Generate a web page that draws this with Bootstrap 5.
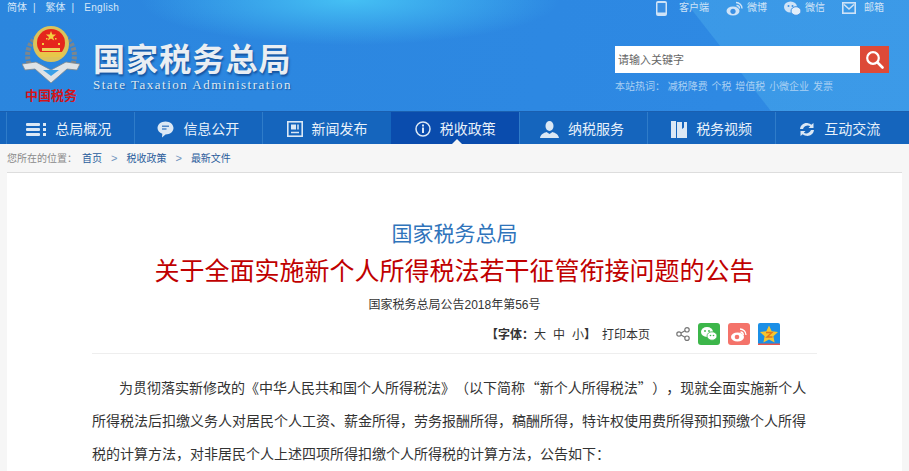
<!DOCTYPE html>
<html lang="zh-CN">
  <head>
    <meta charset="utf-8" />
    <meta name="viewport" content="width=device-width, initial-scale=1" />
    <title>国家税务总局</title>
    <link href="https://cdn.jsdelivr.net/npm/bootstrap@5.3.3/dist/css/bootstrap.min.css" rel="stylesheet" />
    <style>
      html, body { height: 471px; overflow: hidden; }
      body {
        font-family: "Liberation Sans", "Noto Sans CJK SC", sans-serif;
        background: #f6f6f6;
        color: #333;
        text-spacing-trim: space-all;
      }
      a { text-decoration: none; color: inherit; }
      .site-top {
        height: 111px;
        padding: 0 7px;
        color: #d5e6f8;
        background:
          radial-gradient(ellipse 210px 45px at 350px 0, rgba(70,195,245,.95), rgba(70,195,245,0)),
          linear-gradient(52deg, rgba(90,190,240,0) 607px, rgba(90,190,240,.3) 608px),
          linear-gradient(100deg, #2b86de 0%, #2d88e2 60%, #2f8ae4 100%);
      }
      .top-links { height: 15px; font-size: 10px; line-height: 15px; }
      .top-links .sep { margin: 0 10px 0 6px; }
      .top-links .lang-en { letter-spacing: .3px; }
      .social { font-size: 10px; line-height: 16px; gap: 17px; margin-right: 18px; color: #cfe3f7; }
      .social svg { display: block; }
      .brand { margin-top: 9px; }
      .emblem { margin: 0 13px 0 15px; }
      .brand-cn {
        font-family: "Noto Sans CJK SC", sans-serif;
        font-weight: 700;
        font-size: 32px;
        letter-spacing: 1.1px;
        line-height: 34px;
        color: #e9eef3;
        text-shadow: 1px 2px 2px rgba(10,60,130,.7);
        margin-top: 15px;
      }
      .brand-en {
        font-family: "Liberation Serif", serif;
        font-size: 13px;
        line-height: 16px;
        letter-spacing: 1.5px;
        color: #dfe8f0;
        margin-top: 3px;
        text-shadow: 1px 1px 1px rgba(10,60,130,.6);
      }
      .search-side { width: 274px; margin: 30px 13px 0 0; }
      .search-box { height: 27px; }
      .search-input {
        border: 0;
        border-radius: 0;
        outline: 0;
        height: 27px;
        padding: 0 3px;
        font-size: 11px;
        flex: 1;
        min-width: 0;
      }
      .search-input::placeholder { color: #666; opacity: 1; }
      .search-go { width: 29px; height: 27px; background: #dd4a38; border: 0; padding: 0; }
      .hot-words { font-size: 10px; line-height: 15px; margin-top: 6px; color: #a9d0f3; white-space: nowrap; }
      .hot-words a { margin-right: 1px; }
      .main-nav { height: 33px; background: #1565bd; border-top: 1px solid #1a5fb0; }
      .main-nav ul { padding: 0 0 0 6px; margin: 0; list-style: none; }
      .main-nav li {
        width: 128.2px;
        height: 32px;
        border-left: 1px solid #2f7cc9;
        position: relative;
      }
      .main-nav a {
        color: #e8f1fa;
        font-size: 14px;
        height: 32px;
        gap: 9px;
        padding: 2px 23px 0 0;
        white-space: nowrap;
      }
      .main-nav li.current { background: #0a4cad; border-left-color: #0a4cad; }
      .main-nav li.current::after {
        content: "";
        position: absolute;
        left: 60px;
        bottom: 0;
        border: 5px solid transparent;
        border-top: 0;
        border-bottom-color: #f6f6f6;
      }
      .crumbs { height: 28px; padding-left: 7px; font-size: 10px; line-height: 29px; color: #8a8a8a; }
      .crumbs a { color: #2a5d9c; }
      .crumbs .arrow { color: #6f93bd; margin: 0 9px; font-size: 11px; }
      .crumbs .here { margin-right: 5px; }
      .article {
        background: #fff;
        margin: 0 7px;
        height: 310px;
        border-top: 1px solid #ddd;
        padding: 46px 85px 0 85px;
      }
      .org-line { font-size: 21px; line-height: 30px; color: #2f74bb; }
      .doc-title { font-size: 25px; line-height: 38px; color: #c00000; font-weight: 400; margin: 3px 0 0; white-space: nowrap; }
      .doc-no { font-size: 12px; line-height: 18px; color: #333; margin-top: 6px; }
      .tools {
        height: 28px;
        margin-top: 6px;
        font-family: "Noto Sans CJK SC", sans-serif;
        font-size: 12px;
        line-height: 28px;
        color: #333;
        padding-right: 37px;
      }
      .size-links span { margin-left: 7px; }
      .size-links b + span { margin-left: 0; }
      .tools svg { display: block; }
      .tools .print { margin: 0 26px 0 6px; }
      .share-list { gap: 8px; }
      .rule { border-top: 1px solid #eee; margin-top: 5px; }
      .doc-body {
        font-family: "Noto Sans CJK SC", sans-serif;
        font-size: 14px;
        line-height: 33px;
        color: #333;
        margin-top: 17px;
        text-indent: 27px;
        word-spacing: -2.5px;
      }
    </style>
  </head>
  <body>
    <header class="site-top">
      <div class="d-flex justify-content-between align-items-start">
        <div class="top-links">
          <a href="#">简体</a><span class="sep">|</span><a href="#">繁体</a><span class="sep">|</span><a href="#" class="lang-en">English</a>
        </div>
        <div class="social d-flex align-items-center">
          <a href="#" class="d-flex align-items-center gap-2">
            <svg class="me-1" width="11" height="15" viewBox="0 0 11 15"><rect width="11" height="15" rx="2" fill="#cfe3f7"/><rect x="1.5" y="2" width="8" height="9.500" fill="#3a8fe3"/></svg>客户端
          </a>
          <a href="#" class="d-flex align-items-center gap-1">
            <svg width="17" height="15" viewBox="0 0 17 15"><ellipse cx="7" cy="10" rx="6.500" ry="4.500" fill="#cfe3f7"/><circle cx="7" cy="10.300" r="2.600" fill="#3a8fe3"/><path d="M10 1.500a6 6 0 0 1 6 6M10.500 4.500a3 3 0 0 1 3 3" stroke="#cfe3f7" stroke-width="1.400" fill="none"/></svg>微博
          </a>
          <a href="#" class="d-flex align-items-center gap-1">
            <svg width="17" height="15" viewBox="0 0 17 15"><ellipse cx="6.500" cy="6" rx="6.500" ry="5.500" fill="#cfe3f7"/><ellipse cx="12" cy="10" rx="5" ry="4.300" fill="#e3eefa" stroke="#3a8fe3"/><circle cx="4.500" cy="5" r="1" fill="#3a8fe3"/><circle cx="8.500" cy="5" r="1" fill="#3a8fe3"/></svg>微信
          </a>
          <a href="#" class="d-flex align-items-center gap-2">
            <svg width="14" height="12" viewBox="0 0 14 12"><rect x=".8" y=".8" width="12.400" height="10.400" fill="none" stroke="#cfe3f7" stroke-width="1.600"/><path d="M2 2.500l5 4.500 5-4.500" fill="none" stroke="#cfe3f7" stroke-width="1.600"/></svg>邮箱
          </a>
        </div>
      </div>
      <div class="d-flex justify-content-between align-items-start">
        <div class="brand d-flex align-items-start">
          <svg class="emblem" width="58" height="79" viewBox="0 0 58 79">
            <path d="M15 12C6 18 3 30 8 42" stroke="#7c868d" stroke-width="5" stroke-dasharray="3 1.500" fill="none"/>
            <path d="M43 12c9 6 12 18 7 30" stroke="#7c868d" stroke-width="5" stroke-dasharray="3 1.500" fill="none"/>
            <circle cx="29" cy="19" r="18" fill="#dcc35a"/>
            <ellipse cx="29" cy="18" rx="14" ry="14" fill="#e5261c"/>
            <path d="M29 6l1.300 3.600h3.800l-3 2.300 1.100 3.700-3.200-2.200-3.200 2.200 1.100-3.700-3-2.300h3.800z" fill="#f4d03f"/>
            <path d="M20 18h2v2h-2zM36 18h2v2h-2zM24 13h1.500v1.500H24zM33 13h1.500v1.500H33z" fill="#f4d03f"/>
            <path d="M20 23h18v3H20z" fill="#f0d35a"/>
            <path d="M17 27h24v5H17z" fill="#e8c64a"/>
            <path d="M0 39l14-2 15 8 15-8 14 2-3 6-10-1-16 14-16-14-10 1z" fill="#dfe3e6" stroke="#7d868c" stroke-width=".8"/>
            <path d="M21 45h16l-8 6z" fill="#39a0e8"/>
            <text x="29" y="75" text-anchor="middle" font-family="Noto Sans CJK SC" font-weight="700" font-size="13" fill="#d2141a">中国税务</text>
          </svg>
          <div>
            <div class="brand-cn">国家税务总局</div>
            <div class="brand-en">State Taxation Administration</div>
          </div>
        </div>
        <div class="search-side">
          <form class="search-box d-flex">
            <input class="search-input" type="text" placeholder="请输入关键字" />
            <button class="search-go d-flex align-items-center justify-content-center" type="button" aria-label="搜索">
              <svg width="19" height="19" viewBox="0 0 19 19"><circle cx="8" cy="8" r="5.800" fill="none" stroke="#fff" stroke-width="2.200"/><path d="M12.500 12.500l5 5" stroke="#fff" stroke-width="2.600" stroke-linecap="round"/></svg>
            </button>
          </form>
          <div class="hot-words">本站热词： <a href="#">减税降费</a> <a href="#">个税</a> <a href="#">增值税</a> <a href="#">小微企业</a> <a href="#">发票</a></div>
        </div>
      </div>
    </header>

    <nav class="main-nav">
      <ul class="d-flex">
        <li><a href="#" class="d-flex align-items-center justify-content-end">
          <svg width="20" height="15" viewBox="0 0 20 15" fill="#dbe8f5"><rect y="1" width="14" height="3" rx="1"/><rect y="6" width="14" height="3" rx="1"/><rect y="11" width="14" height="3" rx="1"/><rect x="17" y="1" width="3" height="3"/><rect x="17" y="6" width="3" height="3"/><rect x="17" y="11" width="3" height="3"/></svg>总局概况</a></li>
        <li><a href="#" class="d-flex align-items-center justify-content-end">
          <svg width="17" height="17" viewBox="0 0 17 17"><path d="M8.500 0.500c4.400 0 8 2.800 8 6.500s-3.600 6.500-8 6.500l-3.500 3 .3-3.700C2.400 11.700.5 9.600.5 7c0-3.700 3.600-6.500 8-6.500z" fill="#dbe8f5"/><path d="M5 5.200h7M5 8h4.500" stroke="#4d86c8" stroke-width="1.500"/></svg>信息公开</a></li>
        <li><a href="#" class="d-flex align-items-center justify-content-end">
          <svg width="16" height="16" viewBox="0 0 16 16" fill="none"><rect x=".8" y=".8" width="14.400" height="14.400" stroke="#dbe8f5" stroke-width="1.600"/><rect x="4" y="3.500" width="5" height="5" fill="#dbe8f5"/><path d="M4 11.500h8M11 3.500v5" stroke="#dbe8f5" stroke-width="1.500"/></svg>新闻发布</a></li>
        <li class="current"><a href="#" class="d-flex align-items-center justify-content-end">
          <svg width="16" height="16" viewBox="0 0 16 16" fill="none"><circle cx="8" cy="8" r="7" stroke="#dbe8f5" stroke-width="1.500"/><rect x="7" y="6.500" width="2" height="5.500" fill="#dbe8f5"/><rect x="7" y="3.500" width="2" height="2" fill="#dbe8f5"/></svg>税收政策</a></li>
        <li><a href="#" class="d-flex align-items-center justify-content-end">
          <svg width="19" height="17" viewBox="0 0 19 17" fill="#dbe8f5"><ellipse cx="9.500" cy="5" rx="4" ry="5"/><path d="M0 17c.5-3.500 3.500-5 6.500-6l3 2 3-2c3 1 6 2.500 6.500 6z"/></svg>纳税服务</a></li>
        <li><a href="#" class="d-flex align-items-center justify-content-end">
          <svg width="16" height="17" viewBox="0 0 16 17" fill="#dbe8f5"><path d="M0 0h5v17H0zM6 1h5v7l2-1.500V1h3v16H6z"/></svg>税务视频</a></li>
        <li><a href="#" class="d-flex align-items-center justify-content-end">
          <svg width="16" height="15" viewBox="0 0 16 15" fill="#dbe8f5"><path d="M1 7C1.500 3 5 .5 9 1.200c1.300.2 2.400.8 3.300 1.500L14.500 1v5h-5l1.700-1.800C9 3 5.500 3.500 4 7zM15 8c-.5 4-4 6.500-8 5.800-1.300-.2-2.400-.8-3.300-1.500L1.500 14V9h5l-1.700 1.800C7 12 10.500 11.500 12 8z"/></svg>互动交流</a></li>
      </ul>
    </nav>

    <div class="crumbs">
      <span class="here">您所在的位置：</span><a href="#">首页</a><span class="arrow">&gt;</span><a href="#">税收政策</a><span class="arrow">&gt;</span><a href="#">最新文件</a>
    </div>

    <main class="article">
      <div class="org-line text-center">国家税务总局</div>
      <h1 class="doc-title text-center">关于全面实施新个人所得税法若干征管衔接问题的公告</h1>
      <div class="doc-no text-center">国家税务总局公告2018年第56号</div>
      <div class="tools d-flex justify-content-end align-items-center">
        <span class="size-links"><b>【字体：</b><span>大</span><span>中</span><span>小</span><b>】</b></span>
        <a href="#" class="print">打印本页</a>
        <div class="share-list d-flex align-items-center">
          <svg width="14" height="14" viewBox="0 0 14 14" fill="none" stroke="#777" stroke-width="1.200"><circle cx="3" cy="7" r="2.200"/><circle cx="11" cy="2.800" r="2.200"/><circle cx="11" cy="11.200" r="2.200"/><path d="M5 6l4-2.200M5 8l4 2.200"/></svg>
          <svg width="22" height="22" viewBox="0 0 22 22"><rect width="22" height="22" rx="3" fill="#3cb64a"/><ellipse cx="9" cy="9" rx="6" ry="5" fill="#fff"/><ellipse cx="14" cy="13" rx="5" ry="4.200" fill="#fff" stroke="#3cb64a" stroke-width=".8"/><circle cx="7" cy="8" r=".9" fill="#3cb64a"/><circle cx="11" cy="8" r=".9" fill="#3cb64a"/><circle cx="12.500" cy="12.500" r=".8" fill="#3cb64a"/><circle cx="15.500" cy="12.500" r=".8" fill="#3cb64a"/></svg>
          <svg width="22" height="22" viewBox="0 0 22 22"><rect width="22" height="22" rx="3" fill="#f4736a"/><ellipse cx="9.500" cy="14" rx="6.500" ry="4.500" fill="#fff"/><circle cx="9" cy="14" r="2.300" fill="#f4736a"/><path d="M12 6a6 6 0 0 1 6 6M12.500 9a3 3 0 0 1 2.800 3" stroke="#fff" stroke-width="1.300" fill="none"/></svg>
          <svg width="22" height="22" viewBox="0 0 22 22"><rect width="22" height="22" rx="2" fill="#1b8fe6"/><rect y="20.500" width="22" height="1.500" fill="#e8554a"/><path d="M11 2.500l2.700 5.700 6.300.8-4.600 4.300 1.200 6.200-5.600-3-5.600 3 1.200-6.200L2 9l6.300-.8z" fill="#f7c52e"/><path d="M8 9.500h6l-5 4.500h5.500" stroke="#e0761c" stroke-width="1.400" fill="none"/></svg>
        </div>
      </div>
      <div class="rule"></div>
      <p class="doc-body">为贯彻落实新修改的《中华人民共和国个人所得税法》（以下简称 “新个人所得税法” ），现就全面实施新个人所得税法后扣缴义务人对居民个人工资、薪金所得，劳务报酬所得，稿酬所得，特许权使用费所得预扣预缴个人所得税的计算方法，对非居民个人上述四项所得扣缴个人所得税的计算方法，公告如下：</p>
    </main>

    <script src="https://cdn.jsdelivr.net/npm/bootstrap@5.3.3/dist/js/bootstrap.bundle.min.js"></script>
  </body>
</html>
